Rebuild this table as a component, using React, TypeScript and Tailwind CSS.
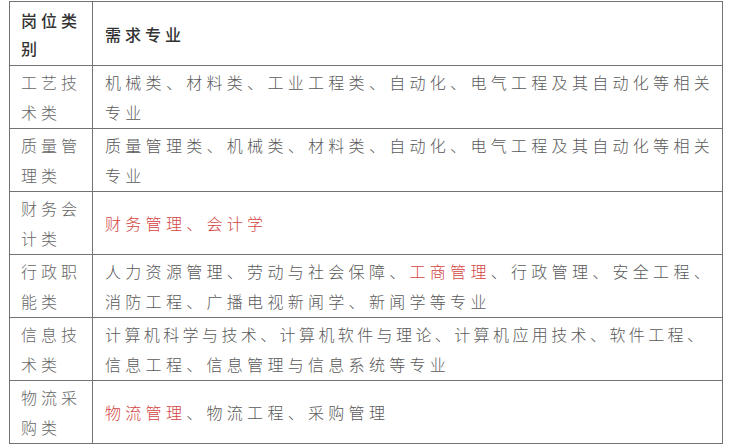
import React from 'react';

type Part = { text: string; red?: boolean };

type Line = { parts: Part[]; tight?: boolean };

type Row = {
  category: string;
  lines: Line[];
};

const rows: Row[] = [
  {
    category: '工艺技术类',
    lines: [
      { parts: [{ text: '机械类、材料类、工业工程类、自动化、电气工程及其自动化等相关' }] },
      { parts: [{ text: '专业' }] },
    ],
  },
  {
    category: '质量管理类',
    lines: [
      { parts: [{ text: '质量管理类、机械类、材料类、自动化、电气工程及其自动化等相关' }] },
      { parts: [{ text: '专业' }] },
    ],
  },
  {
    category: '财务会计类',
    lines: [{ parts: [{ text: '财务管理、会计学', red: true }] }],
  },
  {
    category: '行政职能类',
    lines: [
      {
        parts: [
          { text: '人力资源管理、劳动与社会保障、' },
          { text: '工商管理', red: true },
          { text: '、行政管理、安全工程、' },
        ],
      },
      { parts: [{ text: '消防工程、广播电视新闻学、新闻学等专业' }] },
    ],
  },
  {
    category: '信息技术类',
    lines: [
      { parts: [{ text: '计算机科学与技术、计算机软件与理论、计算机应用技术、软件工程、' }], tight: true },
      { parts: [{ text: '信息工程、信息管理与信息系统等专业' }] },
    ],
  },
  {
    category: '物流采购类',
    lines: [{ parts: [{ text: '物流管理', red: true }, { text: '、物流工程、采购管理' }] }],
  },
];

export default function App() {
  return (
    <div
      className="w-[735px] h-[447px] bg-white pt-[1px] pl-[9px]"
      style={{ fontFamily: '"Noto Sans CJK SC", "Noto Sans", sans-serif' }}
    >
      <table className="border-collapse w-[714px] table-fixed">
        <colgroup>
          <col className="w-[83px]" />
          <col />
        </colgroup>
        <thead>
          <tr className="h-[64px]">
            <th className="border border-[#737373] pl-[11px] pr-[8px] text-left align-middle font-medium text-[#333333] text-[16px] leading-[28px] tracking-[4px]">
              岗位类别
            </th>
            <th className="border border-[#737373] pl-[12px] pr-[10px] text-left align-middle font-medium text-[#333333] text-[16px] leading-[28px] tracking-[4px]">
              需求专业
            </th>
          </tr>
        </thead>
        <tbody>
          {rows.map((row) => (
            <tr key={row.category} className="h-[63px]">
              <td className="border border-[#737373] pl-[11px] pr-[8px] align-middle font-light text-[#666666] text-[16px] leading-[30px] tracking-[4px]">
                {row.category}
              </td>
              <td className="border border-[#737373] pl-[12px] pr-[6px] align-middle font-light text-[#595959] text-[16px] leading-[30px]">
                {row.lines.map((line, i) => (
                  <div
                    key={i}
                    className={`whitespace-nowrap ${line.tight ? 'tracking-[3.4px]' : 'tracking-[4.3px]'}`}
                  >
                    {line.parts.map((p, j) => (
                      <span key={j} className={p.red ? 'text-[#d4443f]' : undefined}>
                        {p.text}
                      </span>
                    ))}
                  </div>
                ))}
              </td>
            </tr>
          ))}
        </tbody>
      </table>
    </div>
  );
}
